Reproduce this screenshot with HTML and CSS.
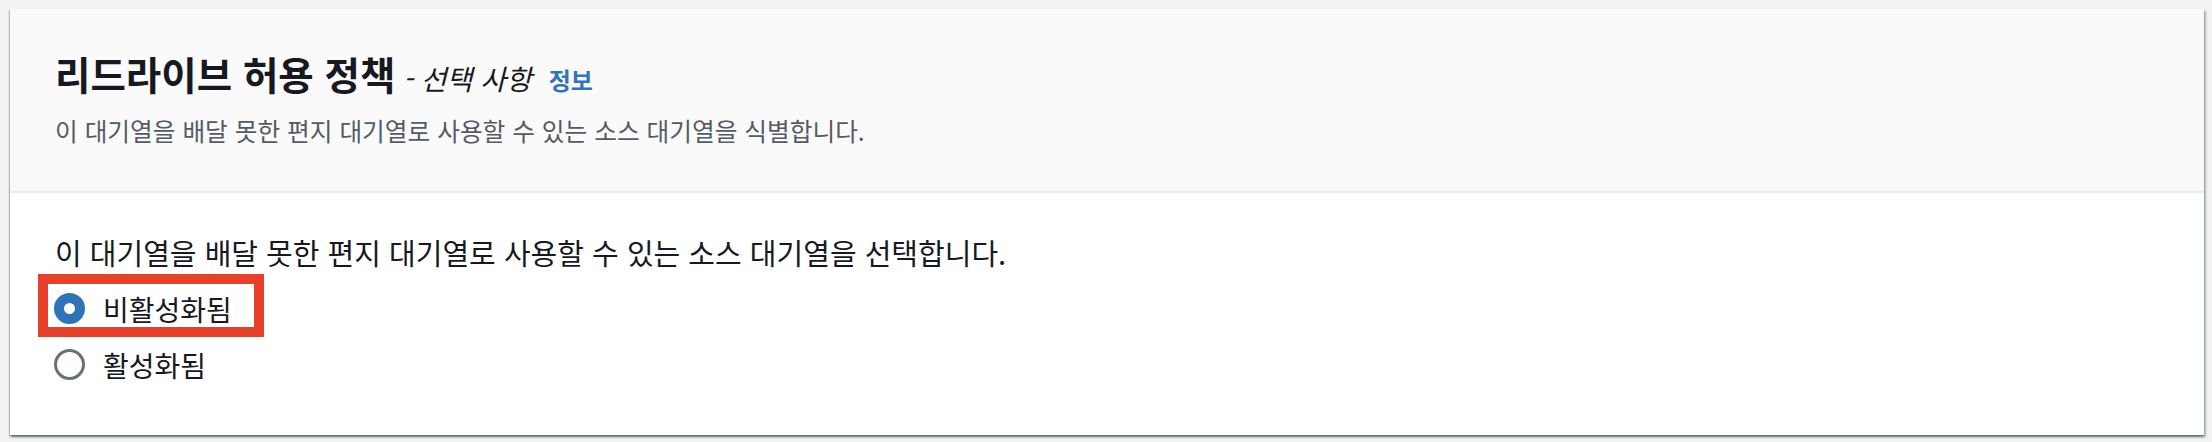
FILE: index.html
```html
<!DOCTYPE html>
<html lang="ko">
  <head>
    <meta charset="UTF-8" />
    <meta name="viewport" content="width=device-width, initial-scale=1.0" />
    <title>리드라이브 허용 정책</title>
    <link rel="stylesheet" href="styles.css">
  </head>
  <body>
    <div class="card">
      <div class="cardHead">
        <h2 class="title">
          리드라이브 허용 정책<span class="optional"> - 선택 사항</span>
          <a href="#" class="info">정보</a>
        </h2>
        <p class="desc">이 대기열을 배달 못한 편지 대기열로 사용할 수 있는 소스 대기열을 식별합니다.</p>
      </div>
      <div class="cardBody">
        <p class="label">이 대기열을 배달 못한 편지 대기열로 사용할 수 있는 소스 대기열을 선택합니다.</p>
        <div class="radioGroup">
          <label class="option marked">
            <span class="dot checked"></span>
            <span class="optText">비활성화됨</span>
          </label>
          <label class="option">
            <span class="dot"></span>
            <span class="optText">활성화됨</span>
          </label>
        </div>
      </div>
    </div>
  </body>
</html>
```

FILE: styles.css
```css
body {
  margin: 0;
  padding: 9px 8px 7px 10px;
  background: #f2f3f3;
  font-family: "Noto Sans CJK KR", "Noto Sans", sans-serif;
  color: #16191f;
}
.card {
  background: #ffffff;
  box-shadow: 0 2px 2px 0 rgba(0, 28, 36, 0.4), 2px 2px 2px 0 rgba(0, 28, 36, 0.25),
    -1px 1px 1px 0 rgba(0, 28, 36, 0.15);
}
.cardHead {
  box-sizing: border-box;
  height: 184px;
  background: #fafafa;
  border-bottom: 2px solid #eaeded;
  padding: 42px 45px 0 45px;
}
.title {
  margin: 0;
  height: 44px;
  font-size: 38.5px;
  line-height: 44px;
  font-weight: 700;
  display: flex;
  align-items: baseline;
}
.optional {
  font-size: 28px;
  font-weight: 400;
  font-style: italic;
  white-space: pre;
}
.info {
  margin-left: 17px;
  font-size: 24px;
  font-weight: 700;
  color: #3273ba;
  text-decoration: none;
}
.desc {
  margin: 19px 0 0;
  height: 32px;
  font-size: 24.7px;
  line-height: 32px;
  color: #545b64;
}
.cardBody {
  box-sizing: border-box;
  height: 242px;
  padding: 41px 45px 0 45px;
}
.label {
  margin: 0;
  height: 36px;
  font-size: 29px;
  line-height: 36px;
}
.radioGroup {
  margin-top: 14px;
  margin-left: -7px;
  display: flex;
  flex-direction: column;
  align-items: flex-start;
  gap: 13px;
}
.option {
  box-sizing: border-box;
  height: 43px;
  padding: 6px 22px 0 6px;
  display: flex;
  align-items: center;
  gap: 18px;
}
.option.marked {
  outline: 10px solid #e8412b;
}
.dot {
  box-sizing: border-box;
  width: 31px;
  height: 31px;
  border-radius: 50%;
  border: 3px solid #687078;
  background: #ffffff;
}
.dot.checked {
  border: 10px solid #2e72b8;
}
.optText {
  font-size: 28px;
  line-height: 36px;
}
```
